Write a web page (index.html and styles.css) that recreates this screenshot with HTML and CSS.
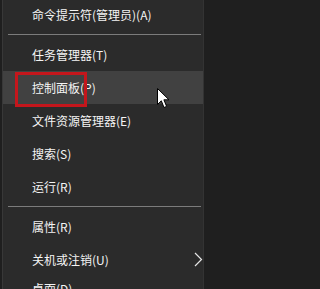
FILE: index.html
```html
<!DOCTYPE html>
<html lang="zh-CN">
<head>
<meta charset="utf-8">
<title>Win+X 菜单</title>
<link rel="stylesheet" href="styles.css">
</head>
<body>
<div class="menu">
  <div class="item">命令提示符(管理员)(A)</div>
  <div class="sep"><div class="line"></div></div>
  <div class="item">任务管理器(T)</div>
  <div class="item hover">控制面板(P)<span class="mark"></span>
    <svg class="cursor" width="13" height="21" viewBox="0 0 13 21"><path d="M0.5 0.5 L0.5 16.5 L4.3 12.8 L7 19.5 L9.6 18.4 L6.9 11.8 L12 11.8 Z" fill="#fff" stroke="#000" stroke-width="1" stroke-linejoin="miter"/></svg>
  </div>
  <div class="item">文件资源管理器(E)</div>
  <div class="item">搜索(S)</div>
  <div class="item">运行(R)</div>
  <div class="sep"><div class="line"></div></div>
  <div class="item">属性(R)</div>
  <div class="item">关机或注销(U)<svg class="chev" width="9" height="15" viewBox="0 0 9 15"><path d="M1 1 L7.5 7.5 L1 14" fill="none" stroke="#e6e6e6" stroke-width="1.2"/></svg></div>
  <div class="item last">桌面(D)</div>
</div>
</body>
</html>
```

FILE: styles.css
```css
html, body {
  margin: 0;
  padding: 0;
  background: #1f1f1f;
  overflow: hidden;
}
body {
  width: 206px;
  height: 289px;
  font-family: "Noto Sans CJK SC", "Noto Sans", sans-serif;
  font-size: 12px;
  color: #f4f4f4;
}
.menu {
  margin-left: 2px;
  margin-top: -2px;
  background: #2b2b2b;
  border-left: 1px solid #383838;
  border-right: 1px solid #333333;
  width: 200px;
}
.item {
  position: relative;
  height: 33px;
  display: flex;
  align-items: center;
  padding-left: 29px;
  padding-right: 0;
}
.item.last {
  height: 25px;
}
.item.hover {
  background: #414141;
}
.sep {
  padding: 3px 0;
}
.line {
  height: 1px;
  margin-left: 5px;
  margin-right: 2px;
  background: #7c7c7c;
}
.mark {
  position: absolute;
  left: 12px;
  top: 1px;
  width: 72px;
  height: 35px;
  box-sizing: border-box;
  border: 3px solid #c4161c;
}
.cursor {
  position: absolute;
  left: 154px;
  top: 17px;
}
.chev {
  margin-left: auto;
  margin-right: 0;
}
```
